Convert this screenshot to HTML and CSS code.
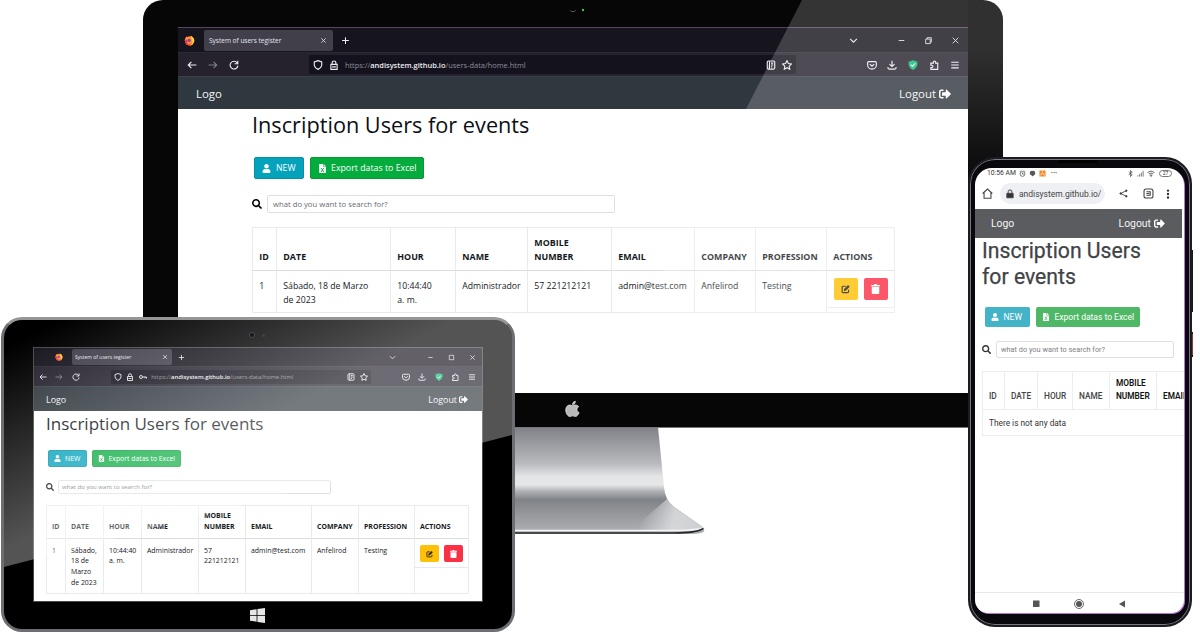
FILE: index.html
```html
<!DOCTYPE html>
<html lang="en">
<head>
<meta charset="utf-8">
<title>System of users register</title>
<link rel="stylesheet" href="styles.css">
</head>
<body>
<svg class="defs" width="0" height="0" aria-hidden="true">
  <symbol id="firefox" viewBox="0 0 16 16"><circle cx="8" cy="8.5" r="6.8" fill="#ff5a2c"/><path d="M1 8Q1 4 4 2l1 2q3-2 5-1L9 1q5 2 6 7l-3 4-6 1z" fill="#ff9a2a"/><path d="M10 1q5 3 5 8-2 6-7 6.500q6-3 4-7z" fill="#ffd43a"/><circle cx="7.500" cy="8" r="2.500" fill="#8a3fc0"/><path d="M1 8q2 8 9 7-7-1-5-7L3 6z" fill="#f0304c"/></symbol>
  <symbol id="x" viewBox="0 0 16 16"><path d="M3 3l10 10M13 3L3 13"/></symbol>
  <symbol id="plus" viewBox="0 0 16 16"><path d="M8 2v12M2 8h12"/></symbol>
  <symbol id="chev" viewBox="0 0 16 16"><path d="M2 5l6 6 6-6"/></symbol>
  <symbol id="min" viewBox="0 0 16 16"><path d="M3 8h10"/></symbol>
  <symbol id="restore" viewBox="0 0 16 16"><path d="M3 5.500h8v8H3zM5.500 5.500V3H13v8h-2"/></symbol>
  <symbol id="max" viewBox="0 0 16 16"><path d="M3 3h10v10H3z"/></symbol>
  <symbol id="back" viewBox="0 0 16 16"><path d="M15 8H2M7 3L2 8l5 5"/></symbol>
  <symbol id="fwd" viewBox="0 0 16 16"><path d="M1 8h13M9 3l5 5-5 5"/></symbol>
  <symbol id="reload" viewBox="0 0 16 16"><path d="M13 4.500A6.200 6.200 0 1 0 14.200 9M14 1v5H9"/></symbol>
  <symbol id="shield" viewBox="0 0 16 16"><path d="M8 1l6 2.200v4Q14 12 8 15 2 12 2 7.200v-4z"/></symbol>
  <symbol id="lock" viewBox="0 0 16 16"><path d="M3 7h10v8H3zM5 7V4.500a3 3 0 0 1 6 0V7M5 11h6"/></symbol>
  <symbol id="key" viewBox="0 0 16 16"><circle cx="4" cy="8" r="3"/><path d="M7 8h8v3M12 8v2.500"/></symbol>
  <symbol id="reader" viewBox="0 0 16 16"><rect x="2" y="1.500" width="12" height="13" rx="2"/><path d="M5.500 2v12M8 5h3.500M8 8h3.500M8 11h2"/></symbol>
  <symbol id="star" viewBox="0 0 16 16"><path d="M8 1l2.200 4.600 5 .7-3.700 3.500.9 5L8 12.400l-4.400 2.400.9-5L.8 6.300l5-.7z"/></symbol>
  <symbol id="pocket" viewBox="0 0 16 16"><path d="M3 2.500h10q2 0 2 2V8a7 6.500 0 0 1-14 0V4.500q0-2 2-2zM4.500 6.500L8 9.800l3.500-3.300"/></symbol>
  <symbol id="down" viewBox="0 0 16 16"><path d="M8 1v9M4 6.500L8 10.500l4-4M1.500 11v1.500q0 2 2 2h9q2 0 2-2V11"/></symbol>
  <symbol id="guard" viewBox="0 0 16 16"><path d="M8 .5l7 2.200v4.800Q14 13 8 16 2 13 1 7.500V2.700z" fill="#12b877" stroke="none"/><path d="M4.500 7.500l2.800 2.800L11.500 5.500" stroke="#d9ffe9"/></symbol>
  <symbol id="ext" viewBox="0 0 16 16"><path d="M3 5h4V3.500a1.800 1.800 0 0 1 3.600 0V5H14v10H3v-3h1.500a1.800 1.800 0 0 0 0-3.600H3z"/></symbol>
  <symbol id="menu" viewBox="0 0 16 16"><path d="M2 3.500h12M2 8h12M2 12.500h12"/></symbol>
  <symbol id="logout" viewBox="0 0 512 512"><path d="M497 273L329 441c-15 15-41 4.500-41-17v-96H152c-13 0-24-11-24-24v-96c0-13 11-24 24-24h136V88c0-21 26-32 41-17l168 168c9 9 9 25 0 34zM192 436v-40c0-7-5-12-12-12H96c-18 0-32-14-32-32V160c0-18 14-32 32-32h84c7 0 12-5 12-12V76c0-7-5-12-12-12H96C43 64 0 107 0 160v192c0 53 43 96 96 96h84c7 0 12-5 12-12z"/></symbol>
  <symbol id="user" viewBox="0 0 448 512"><path d="M224 256c71 0 128-57 128-128S295 0 224 0 96 57 96 128s57 128 128 128zm90 32h-17c-44 21-102 21-146 0h-17C60 288 0 348 0 422v42c0 27 21 48 48 48h352c27 0 48-21 48-48v-42c0-74-60-134-134-134z"/></symbol>
  <symbol id="excel" viewBox="0 0 384 512"><path fill-rule="evenodd" d="M224 136V0H24C11 0 0 11 0 24v464c0 13 11 24 24 24h336c13 0 24-11 24-24V160H248c-13 0-24-11-24-24zM90 224h50l52 76 52-76h50l-75 108 75 116h-50l-52-78-52 78H90l75-116zM256 0v128h128z"/></symbol>
  <symbol id="search" viewBox="0 0 512 512"><path d="M505 442.700L405.300 343c-4.500-4.500-10.600-7-17-7H372c27.600-35.300 44-79.700 44-128C416 93.100 322.900 0 208 0S0 93.100 0 208s93.100 208 208 208c48.300 0 92.700-16.400 128-44v16.300c0 6.400 2.500 12.500 7 17l99.700 99.700c9.400 9.400 24.600 9.400 33.900 0l28.300-28.300c9.400-9.400 9.400-24.600.1-34zM208 336c-70.700 0-128-57.200-128-128 0-70.700 57.200-128 128-128 70.700 0 128 57.200 128 128 0 70.700-57.200 128-128 128z"/></symbol>
  <symbol id="edit" viewBox="0 0 16 16"><path d="M8.500 3H3.500Q2 3 2 4.500V13q0 1.500 1.500 1.500H12q1.500 0 1.500-1.500V9.500" fill="none" stroke="currentColor" stroke-width="2"/><path d="M5 11.500l.5-3.500 7-7L15.500 4l-7 7z"/></symbol>
  <symbol id="trash" viewBox="0 0 14 16"><path d="M0 1.500h4.500L5.500 0h3l1 1.500H14v2H0zM1 4.500h12V14.500Q13 16 11.500 16h-9Q1 16 1 14.500z"/></symbol>
</svg>

<main class="stage">

  <svg class="stand" viewBox="0 0 200 110">
    <defs>
      <linearGradient id="metal" x1="0" y1="0" x2="0" y2="1">
        <stop offset="0" stop-color="#808186"/><stop offset=".12" stop-color="#94959a"/><stop offset=".34" stop-color="#b9babd"/><stop offset=".46" stop-color="#e3e4e6"/><stop offset=".54" stop-color="#e6e7e9"/><stop offset=".6" stop-color="#b0b2b5"/><stop offset=".68" stop-color="#7f8286"/><stop offset=".8" stop-color="#94969a"/><stop offset="1" stop-color="#b0b1b5"/>
      </linearGradient>
      <linearGradient id="shine" x1="130" y1="88" x2="186" y2="98" gradientUnits="userSpaceOnUse"><stop offset="0" stop-color="#dedfe1" stop-opacity="0"/><stop offset=".6" stop-color="#dedfe1" stop-opacity=".85"/><stop offset="1" stop-color="#cfd0d3"/></linearGradient>
    </defs>
    <path d="M0 0H148L154 60Q155 73 164 80L190 98Q202 107 180 107H0z" fill="url(#metal)"/>
    <path d="M157 72Q160 77 165 81L190 98Q200 104 186 104H120z" fill="url(#shine)"/>
    <path d="M0 103.500H168Q186 103 193.500 101" fill="none" stroke="#f5f5f6" stroke-width="1.500"/>
    <path d="M0 106H164Q186 106 193.500 101.500" fill="none" stroke="#26272e" stroke-width="1.500"/>
  </svg>

  <section class="monitor">
    <i class="cam"></i><i class="led"></i>
    <div class="screen">
      <div class="tabs">
        <svg class="ff"><use href="#firefox"/></svg>
        <div class="tab"><span>System of users tegister</span><svg class="ic sm"><use href="#x"/></svg></div>
        <svg class="ic plus"><use href="#plus"/></svg>
        <svg class="ic chev"><use href="#chev"/></svg>
        <svg class="ic win"><use href="#min"/></svg>
        <svg class="ic win"><use href="#restore"/></svg>
        <svg class="ic win"><use href="#x"/></svg>
      </div>
      <div class="tools">
        <svg class="ic"><use href="#back"/></svg><svg class="ic dim"><use href="#fwd"/></svg><svg class="ic"><use href="#reload"/></svg>
        <div class="url"><svg class="ic"><use href="#shield"/></svg><svg class="ic"><use href="#lock"/></svg><span class="addr">https://<b>andisystem.github.io</b>/users-data/home.html</span><svg class="ic"><use href="#reader"/></svg><svg class="ic"><use href="#star"/></svg></div>
        <svg class="ic"><use href="#pocket"/></svg><svg class="ic"><use href="#down"/></svg><svg class="ic"><use href="#guard"/></svg><svg class="ic"><use href="#ext"/></svg><svg class="ic"><use href="#menu"/></svg>
      </div>
      <header class="nav"><span>Logo</span><span class="out">Logout <svg><use href="#logout"/></svg></span></header>
      <div class="page">
        <h1>Inscription Users for events</h1>
        <div class="btns"><span class="btn new"><svg><use href="#user"/></svg>NEW</span><span class="btn xls"><svg><use href="#excel"/></svg>Export datas to Excel</span></div>
        <div class="find"><svg><use href="#search"/></svg><div class="input">what do you want to search for?</div></div>
        <div class="table">
          <div class="th">ID</div><div class="th">DATE</div><div class="th">HOUR</div><div class="th">NAME</div><div class="th">MOBILE<br>NUMBER</div><div class="th">EMAIL</div><div class="th">COMPANY</div><div class="th">PROFESSION</div><div class="th">ACTIONS</div>
          <div class="td">1</div><div class="td">Sábado, 18 de Marzo<br>de 2023</div><div class="td">10:44:40<br>a. m.</div><div class="td">Administrador</div><div class="td">57 221212121</div><div class="td">admin@test.com</div><div class="td">Anfelirod</div><div class="td">Testing</div><div class="td act"><div class="acts"><span class="edit"><svg><use href="#edit"/></svg></span><span class="del"><svg><use href="#trash"/></svg></span></div></div>
        </div>
      </div>
    </div>
    <div class="glare"></div>
    <svg class="apple" viewBox="0 0 16 17"><path d="M11 4.300c1.700 0 2.900.8 3.500 1.800-2.700 1.700-2.200 5 .5 6.200-.8 2.200-2.300 4.200-3.800 4.200-1.200 0-1.600-.7-3-.7s-1.900.7-3 .7C3 16.500.8 13 .8 9.600.8 6 3 4.300 5.200 4.300c1.300 0 2.200.8 3 .8s1.500-.8 2.800-.8zM11 .3c.1 2-1.200 3.600-3 3.600C7.900 2 9.400.5 11 .3z" fill="#b9b9b9" stroke="#eee" stroke-width=".8"/></svg>
  </section>

  <section class="tablet">
    <i class="cam"></i><i class="led"></i>
    <div class="screen">
      <div class="tabs">
        <svg class="ff"><use href="#firefox"/></svg>
        <div class="tab"><span>System of users tegister</span><svg class="ic sm"><use href="#x"/></svg></div>
        <svg class="ic plus"><use href="#plus"/></svg>
        <svg class="ic chev"><use href="#chev"/></svg>
        <svg class="ic win"><use href="#min"/></svg>
        <svg class="ic win"><use href="#max"/></svg>
        <svg class="ic win"><use href="#x"/></svg>
      </div>
      <div class="tools">
        <svg class="ic"><use href="#back"/></svg><svg class="ic dim"><use href="#fwd"/></svg><svg class="ic"><use href="#reload"/></svg>
        <div class="url"><svg class="ic"><use href="#shield"/></svg><svg class="ic"><use href="#lock"/></svg><svg class="ic"><use href="#key"/></svg><span class="addr">https://<b>andisystem.github.io</b>/users-data/home.html</span><svg class="ic"><use href="#reader"/></svg><svg class="ic"><use href="#star"/></svg></div>
        <svg class="ic"><use href="#pocket"/></svg><svg class="ic"><use href="#down"/></svg><svg class="ic"><use href="#guard"/></svg><svg class="ic"><use href="#ext"/></svg><svg class="ic"><use href="#menu"/></svg>
      </div>
      <header class="nav"><span>Logo</span><span class="out">Logout <svg><use href="#logout"/></svg></span></header>
      <div class="page">
        <h1>Inscription Users for events</h1>
        <div class="btns"><span class="btn new"><svg><use href="#user"/></svg>NEW</span><span class="btn xls"><svg><use href="#excel"/></svg>Export datas to Excel</span></div>
        <div class="find"><svg><use href="#search"/></svg><div class="input">what do you want to search for?</div></div>
        <div class="table">
          <div class="th">ID</div><div class="th">DATE</div><div class="th">HOUR</div><div class="th">NAME</div><div class="th">MOBILE<br>NUMBER</div><div class="th">EMAIL</div><div class="th">COMPANY</div><div class="th">PROFESSION</div><div class="th">ACTIONS</div>
          <div class="td">1</div><div class="td">Sábado,<br>18 de<br>Marzo<br>de 2023</div><div class="td">10:44:40<br>a. m.</div><div class="td">Administrador</div><div class="td">57<br>221212121</div><div class="td">admin@test.com</div><div class="td">Anfelirod</div><div class="td">Testing</div><div class="td act"><div class="acts"><span class="edit"><svg><use href="#edit"/></svg></span><span class="del"><svg><use href="#trash"/></svg></span></div></div>
        </div>
      </div>
    </div>
    <div class="glare"></div>
    <svg class="windows" viewBox="0 0 15 15"><path d="M0 2.200L6.600 1.200V7H0zM7.400 1.100L15 0v7H7.400zM0 7.800h6.600v5.900L0 12.800zM7.400 7.800H15V15l-7.600-1.100z" fill="#e6e6e6"/></svg>
  </section>

  <i class="side volume"></i><i class="side power"></i>
  <section class="phone">
    <i class="ear"></i>
    <div class="screen">
      <div class="status">
        <span class="time">10:56 AM</span>
        <svg class="alarm" viewBox="0 0 16 16"><circle cx="8" cy="9" r="5.500"/><path d="M2 4l3-3M14 4l-3-3M8 6v3.500h3"/></svg>
        <svg class="dot" viewBox="0 0 16 16"><path d="M5 3h6q2 0 2 2v4q0 2-2 2l-3 3-1-3H5q-2 0-2-2V5q0-2 2-2z" fill="#555"/></svg>
        <svg class="orange" viewBox="0 0 16 16"><path d="M1 1h14v14H1z" fill="#f58a2c" stroke="none"/><path d="M4 12q0-4 4-4t4 4M8 3v3" stroke="#fff"/></svg>
        <span class="more">•••</span>
        <svg class="bt" viewBox="0 0 16 16"><path d="M4 5l8 6-4 4V1l4 4-8 6"/></svg>
        <svg class="sig" viewBox="0 0 16 16"><path d="M2 15v-3M6 15V9M10 15V6M14 15V2"/></svg>
        <svg class="wifi" viewBox="0 0 16 14"><path d="M1 5q7-6 14 0M3.500 8q4.500-4 9 0M6 10.500q2-1.500 4 0L8 13z"/></svg>
        <span class="bat">27</span>
      </div>
      <div class="bar">
        <svg class="home" viewBox="0 0 16 16"><path d="M1 8l7-6.500L15 8M3 7v8h10V7"/></svg>
        <div class="pill"><svg viewBox="0 0 16 16"><path d="M3 7h10v7H3z" fill="#333"/><path d="M5 7V4.500a3 3 0 0 1 6 0V7"/></svg><span>andisystem.github.io/</span></div>
        <svg class="share" viewBox="0 0 16 16"><path d="M13 3L3 8l10 5"/><g fill="#333"><circle cx="13" cy="3" r="1.400"/><circle cx="3" cy="8" r="1.400"/><circle cx="13" cy="13" r="1.400"/></g></svg>
        <svg class="page-ic" viewBox="0 0 16 16"><rect x="1.500" y="1.500" width="13" height="13" rx="3"/><path d="M5 5.500h5.500v5H5M5 8h4"/></svg>
        <svg class="kebab" viewBox="0 0 16 16"><g fill="#333" stroke="none"><circle cx="8" cy="2.500" r="1.900"/><circle cx="8" cy="8" r="1.900"/><circle cx="8" cy="13.500" r="1.900"/></g></svg>
      </div>
      <header class="nav"><span>Logo</span><span class="out">Logout <svg><use href="#logout"/></svg></span></header>
      <div class="page">
        <h1>Inscription Users<br>for events</h1>
        <div class="btns"><span class="btn new"><svg><use href="#user"/></svg>NEW</span><span class="btn xls"><svg><use href="#excel"/></svg>Export datas to Excel</span></div>
        <div class="find"><svg><use href="#search"/></svg><div class="input">what do you want to search for?</div></div>
        <div class="table">
          <div class="th">ID</div><div class="th">DATE</div><div class="th">HOUR</div><div class="th">NAME</div><div class="th strong">MOBILE<br>NUMBER</div><div class="th strong">EMAIL</div>
          <div class="td none">There is not any data</div>
        </div>
      </div>
      <div class="keys"><svg viewBox="0 0 100 14"><path d="M0 3.500h6.500v6.500H0z" fill="#555"/><circle cx="46" cy="7" r="4.500" fill="none" stroke="#666"/><circle cx="46" cy="7" r="3" fill="#555"/><path d="M92 3.500v7l-6-3.500z" fill="#555"/></svg></div>
    </div>
  </section>
</main>
</body>
</html>
```
FILE: styles.css
```css
* { box-sizing: border-box; }
html, body { margin: 0; overflow: hidden; background: #fff; }
body { font-family: "Open Sans", "Noto Sans", sans-serif; }
svg { display: block; flex: none; overflow: visible; }
.defs { position: absolute; }
.stage { position: relative; width: 1200px; height: 633px; overflow: hidden; }

/* devices on the canvas */
.stand { position: absolute; left: 510px; top: 427px; width: 200px; height: 110px; }
.monitor {
  position: absolute; left: 143px; top: 0; width: 860px; height: 427px;
  padding: 27px 35px 34px; border-radius: 20px 20px 0 0;
  background: linear-gradient(#303030 50px, #0c0c0c 170px) right top / 35px 427px no-repeat, #060606;
  box-shadow: 0 1px 0 #77777b;
}
.tablet {
  position: absolute; left: 1px; top: 317px; width: 514px; height: 315px;
  padding: 28px 30px 28px 30px; border: 3px solid #6c6e73; border-top-color: #969696;
  border-radius: 21px; background: #000;
}
.phone {
  position: absolute; left: 968px; top: 157px; width: 224px; height: 470px;
  padding: 9px 6px 12px 5px; border: 2px solid #1d1c24; border-radius: 27px;
  background: #09090d; box-shadow: inset 0 0 0 1px #77757f;
}
.cam, .led, .ear, .side { position: absolute; display: block; }
.monitor .cam { left: 427px; top: 8px; width: 6px; height: 4px; border-radius: 0 0 4px 4px; border-bottom: 1px solid #666; }
.monitor .led { left: 439px; top: 9px; width: 2px; height: 2px; background: #1ddf1d; }
.tablet .cam { left: 245px; top: 12px; width: 6px; height: 6px; border-radius: 50%; background: #15151c; border: 1px solid #4b4b52; z-index: 2; }
.tablet .led { left: 258px; top: 14px; width: 3px; height: 3px; border-radius: 50%; background: #444; z-index: 2; }
.apple { position: absolute; left: 422px; top: 401px; width: 15px; height: 16px; }
.windows { position: absolute; left: 246px; top: 288px; width: 15px; height: 15px; }
.monitor .glare {
  position: absolute; left: 0; top: 0; width: 825px; height: 393px;
  background: rgba(255,255,255,.19); clip-path: polygon(659px 0, 825px 0, 825px 393px, 457px 393px);
}
.tablet .glare {
  position: absolute; inset: 0; border-radius: 18px;
  background: linear-gradient(153deg, rgba(255,255,255,0) 25px, rgba(255,255,255,.33) 205px);
  clip-path: polygon(0 0, 508px 0, 508px 115px, 0 247px);
}
.monitor .screen { height: 366px; background: #fff; border-top: 1px solid #5a4560; }
.tablet .screen { width: 448px; height: 253px; background: #fff; box-shadow: 0 0 0 1px #494949; overflow: hidden; }

/* browser chrome */
.ic { fill: none; stroke: #ededf2; stroke-width: 1.8; }
.dim { opacity: .45; }
.tabs, .tools, .url, .tab { display: flex; align-items: center; }
.tabs { background: #16141d; border-bottom: 1px solid #2c2936; color: #e6e6ea; }
.tools { background: #25222e; }
.url { background: #14121c; color: #8f8e98; white-space: nowrap; }
.url b { font-weight: 600; color: #eeeef2; }
.addr { flex: 1; }
.tab { background: #413f4a; border-radius: 2px; justify-content: space-between; white-space: nowrap; }
.chev { margin-left: auto; }

.monitor .tabs { height: 25px; padding: 0 8px 0 6px; }
.monitor .ff { width: 11px; height: 11px; }
.monitor .tab { width: 129px; height: 21px; margin-left: 9px; padding: 0 6px 0 5px; font-size: 6.5px; }
.monitor .tabs .sm { width: 7px; height: 7px; }
.monitor .plus { width: 9px; height: 9px; margin-left: 8px; }
.monitor .chev { width: 9px; height: 9px; }
.monitor .win { width: 9px; height: 9px; margin-left: 18px; stroke-width: 1.5; }
.monitor .chev + .win { margin-left: 39px; }
.monitor .tools { height: 23px; padding: 0 8px 0 9px; gap: 10.800px; }
.monitor .tools .ic { width: 10px; height: 10px; }
.monitor .url { width: 487px; height: 19px; margin: 0 60px 0 59.500px; padding: 0 4px; gap: 6px; font-size: 7.450px; border-radius: 2px; }

.tablet .tabs { height: 19px; padding: 0 6px 0 21px; }
.tablet .ff { width: 8px; height: 8px; }
.tablet .tab { width: 100px; height: 16px; margin-left: 9px; padding: 0 4px 0 3px; font-size: 5.050px; }
.tablet .tabs .sm { width: 6px; height: 6px; }
.tablet .plus { width: 7px; height: 7px; margin-left: 6px; }
.tablet .chev { width: 7px; height: 7px; }
.tablet .win { width: 7px; height: 7px; margin-left: 14px; stroke-width: 1.600; }
.tablet .chev + .win { margin-left: 31px; }
.tablet .tools { height: 19px; padding: 0 6px 0 5px; gap: 8.400px; }
.tablet .tools .ic { width: 8px; height: 8px; }
.tablet .url { width: 260px; height: 14px; margin: 0 23px 0 22.500px; padding: 0 3px; gap: 4.500px; font-size: 5.850px; }

/* site */
.nav { display: flex; align-items: center; justify-content: space-between; background: #30383f; color: #f4f5f6; white-space: nowrap; }
.out { display: flex; align-items: center; }
.out svg { fill: #fff; }
.monitor .nav { height: 33px; padding: 1px 17px 0 18px; font-size: 11.400px; border-top: 1px solid #3c4149; }
.monitor .out svg { width: 12px; height: 12px; margin-left: 3px; }
.tablet .nav { height: 25px; padding: 0 14px 0 12px; font-size: 8.900px; border-top: 1px solid #3c4149; }
.tablet .out svg { width: 9px; height: 9px; margin-left: 2px; }

h1 { margin: 0; font-weight: 400; color: #0b1015; white-space: nowrap; }
.btns, .find, .btn { display: flex; align-items: center; }
.btn { color: #fff; white-space: nowrap; border-radius: 2px; }
.btn svg, .find svg { fill: currentColor; }
.new { background: #04a3bb; border: 1px solid #078fa4; }
.xls { background: #04ab3d; border: 1px solid #089838; }
.input { border: 1px solid #dce0e2; border-radius: 2px; color: #686d72; display: flex; align-items: center; white-space: nowrap; }
.table { display: grid; border: solid #e8ebed; border-width: 1px 1px 1px 0; color: #15191d; }
.th, .td { border-left: 1px solid #e8ebed; white-space: nowrap; }
.th { display: flex; align-items: flex-end; font-weight: 700; border-bottom: 1px solid #dadde0; }
.acts { display: flex; border-bottom: 1px solid #e8ebed; }
.acts span { display: flex; align-items: center; justify-content: center; border-radius: 2px; }
.edit { background: #ffc107; color: #222; fill: #222; }
.del { background: #fa3045; fill: #fff; }

.monitor .page { padding: 0 73px 0 74px; }
.monitor h1 { font-size: 21.700px; line-height: 32px; }
.monitor .btns { margin: 16px 0 0 2px; gap: 6px; }
.monitor .btn { height: 22px; font-size: 8.800px; padding: 0 7px; gap: 5px; }
.monitor .new { width: 50px; }
.monitor .xls { width: 114px; gap: 4px; }
.monitor .btn svg { width: 9px; height: 9px; }
.monitor .find { margin-top: 16px; gap: 5px; }
.monitor .find svg { width: 10px; height: 10px; }
.monitor .input { width: 348px; height: 18px; padding-left: 5px; font-size: 7.700px; }
.monitor .table {
  grid-template-columns: 24px 114px 65px 72px 84px 83px 61px 71px 69px; grid-template-rows: 42.500px 42.500px;
  width: 643px; height: 86px; margin-top: 14px; line-height: 14px; font-size: 8.700px;
}
.monitor .th { padding: 0 0 6px 6.300px; font-size: 8.900px; }
.monitor .td { padding: 8px 0 0 6.300px; }
.monitor .td.act { padding: 0; }
.monitor .acts { padding: 7px 6.500px; gap: 6px; height: 37px; }
.monitor .acts span { width: 24px; height: 22px; }
.monitor .acts svg { width: 9px; height: 10px; }

.tablet .page { padding: 0 13px 0 12px; }
.tablet h1 { font-size: 17px; line-height: 26px; }
.tablet .btns { margin: 13px 0 0 2px; gap: 5px; }
.tablet .btn { height: 17px; font-size: 6.850px; padding: 0 5px; gap: 4px; }
.tablet .new { width: 39px; }
.tablet .xls { width: 89px; gap: 3.500px; }
.tablet .btn svg { width: 7px; height: 7px; }
.tablet .find { margin-top: 13px; gap: 4px; }
.tablet .find svg { width: 8px; height: 8px; }
.tablet .input { width: 273px; height: 14px; padding-left: 3px; font-size: 6.050px; }
.tablet .table {
  grid-template-columns: 19px 38px 38px 57px 47px 66px 47px 56px 54px; grid-template-rows: 33px 55px;
  width: 423px; height: 89px; margin-top: 11px; line-height: 10.900px; font-size: 6.900px;
}
.tablet .th { padding: 0 0 5px 5px; font-size: 6.950px; }
.tablet .td { padding: 6.500px 0 0 5px; }
.tablet .td.act { padding: 0; }
.tablet .acts { padding: 6px 5px; gap: 5px; height: 29px; }
.tablet .acts span { width: 19px; height: 17px; }
.tablet .acts svg { width: 7px; height: 8px; }

/* phone */
.volume { left: 1190px; top: 250px; width: 3px; height: 62px; background: #17171c; }
.power { left: 1190px; top: 332px; width: 3px; height: 25px; background: #8c3a42; border: solid #17171c; border-width: 2px 0; }
.ear { left: 88px; top: 1px; width: 40px; height: 3px; border-radius: 2px; background: #000; }
.phone .screen {
  height: 445px; width: 209px; overflow: hidden; background: #fff; border-radius: 17px 17px 13px 13px;
  display: flex; flex-direction: column; font-family: Roboto, sans-serif; box-shadow: 1px 1px 0 #b876d8;
}
.phone .status svg, .phone .bar svg { fill: none; stroke: #444; stroke-width: 1.600; }
.status { display: flex; align-items: center; height: 10px; padding: 0 12px 0 12px; font-size: 6.800px; color: #333; white-space: nowrap; }
.status svg { width: 7px; height: 7px; margin-left: 3px; }
.more { margin-left: 5px; font-size: 5px; letter-spacing: .5px; }
.status .bt { margin-left: auto; }
.status .wifi { width: 8px; }
.bat { margin-left: 4px; width: 13px; height: 7px; border: 1px solid #777; border-radius: 4px; font-size: 5px; line-height: 5px; text-align: center; }
.bar { display: flex; align-items: center; height: 31px; padding: 0 11px 0 7px; }
.bar .home { width: 11px; height: 11px; }
.pill { display: flex; align-items: center; gap: 4px; width: 105px; height: 21px; margin-left: 7px; padding-left: 5px; border-radius: 11px; background: #eff0f4; font-size: 8.500px; color: #444; white-space: nowrap; overflow: hidden; }
.pill svg { width: 10px; height: 10px; }
.share { width: 9px; height: 9px; margin-left: 14px; }
.page-ic { width: 11px; height: 11px; margin-left: 14.500px; }
.kebab { width: 10px; height: 10px; margin-left: auto; }
.phone .nav { width: 207px; height: 29px; padding: 0 17px 0 16px; background: #5a5c60; font-size: 10.400px; }
.phone .out svg { width: 11px; height: 11px; margin-left: 3px; }
.phone .page { padding: 0 0 0 7px; flex: 1; overflow: hidden; }
.phone h1 { font-size: 21.200px; line-height: 25.500px; color: #414347; -webkit-text-stroke: .25px #414347; }
.phone .btns { margin: 18px 0 0 2.500px; gap: 6px; }
.phone .btn { height: 20px; font-size: 8.500px; padding: 0 6px; gap: 5px; border: 0; }
.phone .new { width: 45px; background: #43b3c7; }
.phone .xls { width: 104px; background: #4fb866; }
.phone .btn svg { width: 8px; height: 8px; }
.phone .find { margin-top: 14px; gap: 5px; color: #333; }
.phone .find svg { width: 9px; height: 9px; }
.phone .input { width: 178px; height: 17px; padding-left: 4px; font-size: 7.350px; color: #7d7f83; }
.phone .table {
  grid-template-columns: 22px 33px 35px 37px 47px 60px; grid-template-rows: 38px 26px;
  width: 234px; height: 65px; margin-top: 13px; font-size: 8.300px; line-height: 13px; color: #333; border-color: #eceded;
}
.phone .th { padding: 0 0 6px 6px; font-weight: 500; border-color: #eceded; color: #444; }
.phone .strong { color: #111; font-weight: 600; }
.phone .none { grid-column: 1 / -1; padding: 7px 0 0 6px; border-color: #eceded; }
.keys { height: 21px; border-top: 1px solid #e8e8e8; padding: 4px 0 0 57.500px; }
.keys svg { width: 100px; height: 14px; }
```
